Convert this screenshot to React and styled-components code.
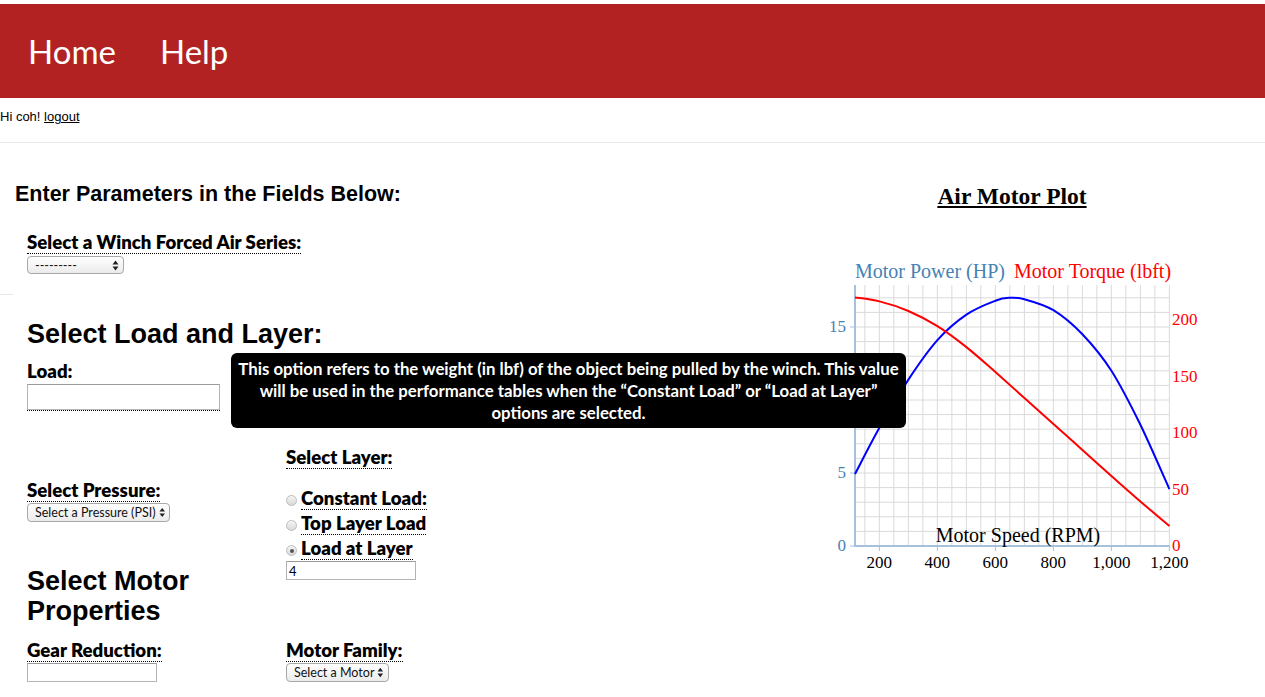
import styled, { createGlobalStyle } from "styled-components";

const GlobalStyle = createGlobalStyle`
  html, body {
    margin: 0;
    padding: 0;
    background: #ffffff;
  }
  body {
    font-family: "Liberation Sans", Arial, sans-serif;
    color: #000;
  }
`;

const Page = styled.div`
  padding-top: 4px;
`;

const NavBar = styled.nav`
  height: 94px;
  background: #b22222;
  display: flex;
  align-items: center;
  gap: 44px;
  padding-left: 28px;
`;

const NavLink = styled.a`
  font-family: Lato, "Open Sans", sans-serif;
  font-size: 33px;
  color: #ffffff;
  text-decoration: none;
`;

const Greeting = styled.div`
  font-size: 13px;
  line-height: 16px;
  padding-top: 11px;

  a {
    color: #000;
    text-decoration: underline;
  }
`;

const Divider = styled.hr`
  margin: 17px 0 0;
  border: 0;
  border-top: 1px solid #e9e9e9;
`;

const Main = styled.main`
  display: flex;
`;

const LeftColumn = styled.section`
  width: 810px;
  flex: none;
`;

const PageTitle = styled.h2`
  margin: 39px 0 0 15px;
  font-size: 21.5px;
  line-height: 24px;
  font-weight: bold;
`;

const Form = styled.div`
  padding-left: 27px;
`;

const FieldLabel = styled.span`
  display: inline-block;
  font-family: Lato, "Open Sans", sans-serif;
  font-weight: 800;
  font-size: 18.6px;
  line-height: 22px;
  border-bottom: ${(p) => (p.$plain ? "none" : "1px dotted #000")};
`;

const Field = styled.div`
  display: flex;
  flex-direction: column;
  align-items: flex-start;
  margin-top: ${(p) => p.$top || 0}px;
  position: relative;
`;

const SelectBox = styled.div`
  display: inline-flex;
  align-items: center;
  justify-content: space-between;
  gap: 3px;
  box-sizing: border-box;
  width: ${(p) => p.$w}px;
  height: ${(p) => p.$h || 19}px;
  margin-top: ${(p) => p.$gap ?? 1}px;
  padding: 0 4px 0 7px;
  border: 1px solid #a8a8a8;
  border-radius: 4px;
  background: linear-gradient(#ffffff, #ebebeb);
  font-family: Lato, "Open Sans", sans-serif;
  font-size: 12.5px;
  white-space: nowrap;
  color: #111;
`;

const TextInput = styled.input`
  box-sizing: border-box;
  width: ${(p) => p.$w}px;
  height: ${(p) => p.$h || 19}px;
  margin: ${(p) => p.$gap ?? 1}px 0 0;
  padding: 0 2px;
  border: 1px solid #b4b4b4;
  border-top-color: #9a9a9a;
  font-family: Lato, sans-serif;
  font-size: 13px;
  color: #000;
  background: #fff;
  outline: none;
`;

const DottedWrap = styled.div`
  border-bottom: 1px dotted #000;
  line-height: 0;
`;

const Stub = styled.div`
  width: 13px;
  height: 1px;
  background: #e6e6e6;
  margin-top: 20px;
`;

const SectionTitle = styled.h3`
  margin: ${(p) => p.$top || 0}px 0 0;
  font-size: 27px;
  line-height: 30px;
  font-weight: bold;
`;

const Columns = styled.div`
  display: grid;
  grid-template-columns: 259px 300px;
  align-items: start;
  margin-top: ${(p) => p.$top || 0}px;
`;

const Column = styled.div`
  display: flex;
  flex-direction: column;
  align-items: flex-start;
  padding-top: ${(p) => p.$top || 0}px;
`;

const RadioList = styled.div`
  display: flex;
  flex-direction: column;
  gap: 2px;
  margin-top: 18px;
`;

const RadioRow = styled.label`
  display: flex;
  align-items: flex-end;
  gap: 4px;
`;

const RadioDot = styled.span`
  position: relative;
  width: 11px;
  height: 11px;
  margin-bottom: 4px;
  box-sizing: border-box;
  border-radius: 50%;
  border: 1px solid #bdbdbd;
  background: linear-gradient(#f6f6f6, #d9d9d9);

  &::after {
    content: "";
    display: ${(p) => (p.$checked ? "block" : "none")};
    position: absolute;
    left: 2.5px;
    top: 2.5px;
    width: 4px;
    height: 4px;
    border-radius: 50%;
    background: #555;
  }
`;

const Tooltip = styled.div`
  position: absolute;
  left: 204px;
  top: -7px;
  width: 675px;
  height: 75px;
  box-sizing: border-box;
  padding-top: 5px;
  background: #000;
  border-radius: 6px;
  color: #fff;
  text-align: center;
  font-family: Lato, "Open Sans", sans-serif;
  font-weight: 700;
  font-size: 16.8px;
  line-height: 22px;
  z-index: 5;

  span {
    display: block;
    white-space: nowrap;
  }
`;

const RightColumn = styled.section`
  width: 404px;
  flex: none;
  display: flex;
  flex-direction: column;
  align-items: center;
`;

const PlotTitle = styled.h2`
  margin: 39px 0 0;
  font-family: "Liberation Serif", "Times New Roman", serif;
  font-size: 23.5px;
  line-height: 28px;
  font-weight: bold;
  text-decoration: underline;
`;

const ChartSvg = styled.svg`
  display: block;
  margin-top: 44px;
  font-family: "Liberation Serif", "Times New Roman", serif;
`;

function Arrows() {
  return (
    <svg width="7" height="11" viewBox="0 0 7 11">
      <path d="M3.5 0.5 L6.5 4.5 L0.5 4.5 Z" fill="#222" />
      <path d="M3.5 10.5 L6.5 6.5 L0.5 6.5 Z" fill="#222" />
    </svg>
  );
}

function Select({ text, w, h, gap }) {
  return (
    <SelectBox $w={w} $h={h} $gap={gap}>
      <span>{text}</span>
      <Arrows />
    </SelectBox>
  );
}

function Radio({ label, checked }) {
  return (
    <RadioRow>
      <RadioDot $checked={checked} />
      <FieldLabel>{label}</FieldLabel>
    </RadioRow>
  );
}

// chart scales
const RPM0 = 116;
const xs = (r) => 45 + (r - RPM0) * 0.29;
const BASE = 292;
const yHp = (hp) => BASE - hp * 14.6;
const yLb = (t) => BASE - t * 1.13;

const torque = [
  [116, 220], [200, 216.5], [300, 208], [400, 194.5], [500, 176], [600, 154],
  [700, 131], [800, 108], [900, 85], [1000, 62], [1100, 39.5], [1200, 17.7],
];

const power = [
  [116, 4.93], [200, 8.1], [300, 11.4], [400, 14.1], [500, 15.85], [600, 16.8],
  [650, 17.0], [700, 16.9], [800, 16.15], [900, 14.5], [1000, 12.0],
  [1100, 8.3], [1200, 3.9],
];

function smoothPath(pts) {
  let d = `M${pts[0][0].toFixed(1)},${pts[0][1].toFixed(1)}`;
  for (let i = 0; i < pts.length - 1; i++) {
    const p0 = pts[i - 1] || pts[i];
    const p1 = pts[i];
    const p2 = pts[i + 1];
    const p3 = pts[i + 2] || p2;
    const c1x = p1[0] + (p2[0] - p0[0]) / 6;
    const c1y = p1[1] + (p2[1] - p0[1]) / 6;
    const c2x = p2[0] - (p3[0] - p1[0]) / 6;
    const c2y = p2[1] - (p3[1] - p1[1]) / 6;
    d += ` C${c1x.toFixed(1)},${c1y.toFixed(1)} ${c2x.toFixed(1)},${c2y.toFixed(1)} ${p2[0].toFixed(1)},${p2[1].toFixed(1)}`;
  }
  return d;
}

function MotorChart() {
  const right = xs(1200);
  const vGrid = [];
  for (let r = 150; r <= 1200; r += 50) vGrid.push(r);
  const hGrid = [];
  for (let h = 1; h <= 17; h++) hGrid.push(h);

  return (
    <ChartSvg width="404" height="325" viewBox="0 0 404 325">
      <text x="45" y="24" fontSize="20" fill="#4682b4">Motor Power (HP)</text>
      <text x="204" y="24" fontSize="20" fill="#ff0000">Motor Torque (lbft)</text>

      {vGrid.map((r) => (
        <line key={"v" + r} x1={xs(r)} x2={xs(r)} y1="31" y2={BASE} stroke="#dadada" strokeWidth="1" />
      ))}
      {hGrid.map((h) => (
        <line key={"h" + h} x1="45" x2={right} y1={yHp(h)} y2={yHp(h)} stroke="#dadada" strokeWidth="1" />
      ))}

      <line x1="45" x2="45" y1="31" y2={BASE + 1} stroke="#a7c0dc" strokeWidth="2" />
      <line x1="45" x2={right} y1={BASE} y2={BASE} stroke="#a7c0dc" strokeWidth="2" />

      {[0, 5, 15].map((v) => (
        <g key={"l" + v}>
          <line x1="40" x2="45" y1={yHp(v)} y2={yHp(v)} stroke="#a7c0dc" />
          <text x="36" y={yHp(v) + 5} fontSize="17" fill="#4682b4" textAnchor="end">{v}</text>
        </g>
      ))}
      {[0, 50, 100, 150, 200].map((v) => (
        <text key={"r" + v} x="362" y={yLb(v) + 5} fontSize="17" fill="#ff0000">{v}</text>
      ))}
      {[200, 400, 600, 800, 1000, 1200].map((v) => (
        <g key={"b" + v}>
          <line x1={xs(v)} x2={xs(v)} y1={BASE} y2={BASE + 5} stroke="#a7c0dc" />
          <text x={xs(v)} y="314" fontSize="17" fill="#000" textAnchor="middle">
            {v.toLocaleString("en-US")}
          </text>
        </g>
      ))}

      <path d={smoothPath(power.map(([r, p]) => [xs(r), yHp(p)]))} fill="none" stroke="#0000ff" strokeWidth="2" />
      <path d={smoothPath(torque.map(([r, t]) => [xs(r), yLb(t)]))} fill="none" stroke="#ff0000" strokeWidth="2" />

      <text x="208" y="288" fontSize="20" fill="#000" textAnchor="middle">Motor Speed (RPM)</text>
    </ChartSvg>
  );
}

export default function App() {
  return (
    <Page>
      <GlobalStyle />
      <NavBar>
        <NavLink href="#">Home</NavLink>
        <NavLink href="#">Help</NavLink>
      </NavBar>

      <Greeting>
        Hi coh! <a href="#">logout</a>
      </Greeting>
      <Divider />

      <Main>
        <LeftColumn>
          <PageTitle>Enter Parameters in the Fields Below:</PageTitle>

          <Form>
            <Field $top={25}>
              <FieldLabel>Select a Winch Forced Air Series:</FieldLabel>
              <Select text="---------" w={97} h={18} gap={2} />
            </Field>
          </Form>

          <Stub />

          <Form>
            <SectionTitle $top={24}>Select Load and Layer:</SectionTitle>

            <Field $top={11}>
              <FieldLabel $plain>Load:</FieldLabel>
              <DottedWrap>
                <TextInput $w={193} $h={26} $gap={2} />
              </DottedWrap>
              <Tooltip>
                <span>This option refers to the weight (in lbf) of the object being pulled by the winch. This value</span>
                <span>will be used in the performance tables when the “Constant Load” or “Load at Layer”</span>
                <span>options are selected.</span>
              </Tooltip>
            </Field>

            <Columns>
              <Column $top={68}>
                <FieldLabel>Select Pressure:</FieldLabel>
                <Select text="Select a Pressure (PSI)" w={143} />
                <SectionTitle $top={44}>Select Motor Properties</SectionTitle>
              </Column>

              <Column $top={35}>
                <FieldLabel>Select Layer:</FieldLabel>
                <RadioList>
                  <Radio label="Constant Load:" />
                  <Radio label="Top Layer Load" />
                  <Radio label="Load at Layer" checked />
                </RadioList>
                <TextInput $w={130} defaultValue="4" />
              </Column>
            </Columns>

            <Columns $top={13}>
              <Column>
                <FieldLabel>Gear Reduction:</FieldLabel>
                <TextInput $w={130} />
              </Column>
              <Column>
                <FieldLabel>Motor Family:</FieldLabel>
                <Select text="Select a Motor" w={103} />
              </Column>
            </Columns>
          </Form>
        </LeftColumn>

        <RightColumn>
          <PlotTitle>Air Motor Plot</PlotTitle>
          <MotorChart />
        </RightColumn>
      </Main>
    </Page>
  );
}
